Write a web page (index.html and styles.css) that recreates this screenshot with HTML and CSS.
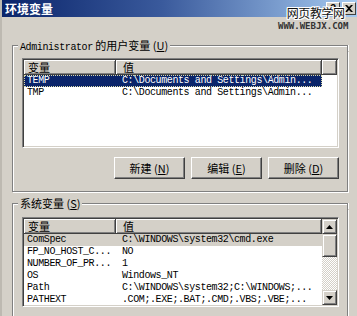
FILE: index.html
```html
<!DOCTYPE html>
<html lang="zh-CN">
<head>
    <meta charset="UTF-8">
    <meta name="viewport" content="width=device-width, initial-scale=1.0">
    <title>环境变量</title>
    <link rel="stylesheet" href="styles.css">
</head>
<body>

<div class="window">
    <div class="titlebar">
        <span class="title">环境变量</span>
        <div class="tb-buttons">
            <span class="tb-btn">?</span>
            <span class="tb-btn">
                <svg width="8" height="7" viewBox="0 0 8 7"><path d="M0 0h2l2 2 2-2h2L5 3.5 8 7H6L4 5 2 7H0l3-3.5z" fill="#000"/></svg>
            </span>
        </div>
    </div>

    <!-- watermark over the corner -->
    <div class="watermark">
        <div class="wm-cn">网页教学网</div>
        <div class="wm-en">WWW.WEBJX.COM</div>
    </div>

    <div class="content">
        <section class="group">
            <div class="group-top"><span class="group-title"><span class="mono">Administrator</span> 的用户变量 (<u>U</u>)</span></div>
            <div class="group-body user-body">
                <div class="list">
                    <div class="list-main">
                        <div class="hd">
                            <div class="h1">变量</div>
                            <div class="h2">值</div>
                            <div class="hfill"></div>
                        </div>
                        <div class="row sel"><div class="c1 mono">TEMP</div><div class="c2 mono">C:\Documents and Settings\Admin...</div></div>
                        <div class="row"><div class="c1 mono">TMP</div><div class="c2 mono">C:\Documents and Settings\Admin...</div></div>
                    </div>
                </div>
                <div class="buttons">
                    <button class="btn">新建 (<u>N</u>)</button>
                    <button class="btn">编辑 (<u>E</u>)</button>
                    <button class="btn">删除 (<u>D</u>)</button>
                </div>
            </div>
        </section>

        <section class="group sys">
            <div class="group-top"><span class="group-title">系统变量 (<u>S</u>)</span></div>
            <div class="group-body sys-body">
                <div class="list">
                    <div class="list-main">
                        <div class="hd">
                            <div class="h1">变量</div>
                            <div class="h2">值</div>
                        </div>
                        <div class="row dim"><div class="c1 mono">ComSpec</div><div class="c2 mono">C:\WINDOWS\system32\cmd.exe</div></div>
                        <div class="row"><div class="c1 mono">FP_NO_HOST_C...</div><div class="c2 mono">NO</div></div>
                        <div class="row"><div class="c1 mono">NUMBER_OF_PR...</div><div class="c2 mono">1</div></div>
                        <div class="row"><div class="c1 mono">OS</div><div class="c2 mono">Windows_NT</div></div>
                        <div class="row"><div class="c1 mono">Path</div><div class="c2 mono">C:\WINDOWS\system32;C:\WINDOWS;...</div></div>
                        <div class="row"><div class="c1 mono">PATHEXT</div><div class="c2 mono">.COM;.EXE;.BAT;.CMD;.VBS;.VBE;...</div></div>
                    </div>
                    <div class="scrollbar">
                        <div class="sb-btn"><svg width="7" height="4" viewBox="0 0 7 4"><path d="M3.5 0L7 4H0z" fill="#000"/></svg></div>
                        <div class="sb-thumb"></div>
                        <div class="sb-track"></div>
                        <div class="sb-btn"><svg width="7" height="4" viewBox="0 0 7 4"><path d="M0 0h7L3.5 4z" fill="#000"/></svg></div>
                    </div>
                </div>
            </div>
        </section>
    </div>
</div>

</body>
</html>
```

FILE: styles.css
```css
body {
    margin: 0;
    background: #d4d0c8;
    font-family: "Noto Sans CJK SC", sans-serif;
    font-size: 11px;
    color: #000;
}
.window {
    position: relative;
    width: 355px;
    height: 316px;
    overflow: hidden;
    background: #d4d0c8;
    border-left: 2px solid #bdb9b1;
}
.titlebar {
    display: flex;
    align-items: center;
    height: 17px;
    padding: 0 1px 0 3px;
    background: linear-gradient(to right, #0a246a, #3a5a9c 45%, #a6caf0);
    color: #fff;
}
.title {
    font-size: 12px;
    font-weight: bold;
    line-height: 17px;
}
.tb-buttons {
    display: flex;
    gap: 2px;
    margin-left: auto;
}
.tb-btn {
    display: flex;
    align-items: center;
    justify-content: center;
    width: 12px;
    height: 11px;
    background: #d4d0c8;
    border: 1px solid;
    border-color: #fff #404040 #404040 #fff;
    color: #000;
    font-family: "Liberation Sans", sans-serif;
    font-weight: bold;
    font-size: 10px;
    line-height: 11px;
}
.watermark {
    position: absolute;
    left: 276px;
    top: 5px;
    text-align: center;
}
.wm-cn {
    font-size: 12px;
    line-height: 15px;
    color: #111;
    padding-left: 5px;
    letter-spacing: -0.4px;
    text-shadow: 1px 0 #fff, -1px 0 #fff, 0 1px #fff, 0 -1px #fff, 1px 1px #fff, -1px -1px #fff, 1px -1px #fff, -1px 1px #fff;
}
.wm-en {
    font-family: "DejaVu Sans Mono", monospace;
    font-weight: bold;
    font-size: 9px;
    line-height: 10px;
    color: #333;
    margin-top: 1px;
}
.content {
    padding: 22px 9px 0 10px;
}
.group-top {
    display: flex;
    height: 12px;
}
.group-top::before {
    content: "";
    width: 5px;
    margin-top: 6px;
    border-top: 1px solid #808080;
    border-left: 1px solid #808080;
    box-shadow: inset 1px 1px 0 #fff;
}
.group-top::after {
    content: "";
    flex: 1;
    margin-top: 6px;
    border-top: 1px solid #808080;
    border-right: 1px solid #808080;
    box-shadow: inset 0 1px 0 #fff, 1px 0 0 #fff;
}
.group-title {
    padding: 0 2px;
    line-height: 12px;
    white-space: nowrap;
}
.group-body {
    border: 1px solid #808080;
    border-top: 0;
    box-shadow: inset 1px 0 0 #fff, 1px 1px 0 #fff;
}
.user-body {
    padding: 7px 8px 12px 9px;
}
.sys {
    margin-top: 5px;
}
.sys-body {
    padding: 8px 8px 12px 9px;
}
.mono {
    font-family: "Liberation Mono", monospace;
    font-size: 10px;
    letter-spacing: -0.4px;
}
.list {
    display: flex;
    height: 90px;
    box-sizing: border-box;
    background: #fff;
    border: 1px solid;
    border-color: #808080 #fff #fff #808080;
    box-shadow: inset 1px 1px 0 #404040, inset -1px -1px 0 #d4d0c8;
    padding: 1px;
}
.list-main {
    flex: 1;
}
.hd {
    display: flex;
    height: 15px;
}
.hd div {
    box-sizing: border-box;
    height: 15px;
    line-height: 14px;
    background: #d4d0c8;
    border-right: 1px solid #404040;
    border-bottom: 1px solid #404040;
    box-shadow: inset 1px 1px 0 #fff, inset -1px -1px 0 #808080;
}
.h1 {
    width: 92px;
    padding-left: 4px;
}
.h2 {
    width: 206px;
    padding-left: 7px;
}
.hfill {
    flex: 1;
}
.row {
    display: flex;
    width: 298px;
    height: 12px;
    line-height: 12px;
    white-space: nowrap;
}
.c1 {
    width: 92px;
    padding-left: 3px;
    box-sizing: border-box;
}
.c2 {
    width: 206px;
    padding-left: 6px;
    box-sizing: border-box;
}
.row.sel {
    background: #0a246a;
    color: #fff;
    outline: 1px dotted #d8d8a8;
    outline-offset: -1px;
}
.row.dim {
    background: #d4d0c8;
}
.buttons {
    display: flex;
    justify-content: flex-end;
    gap: 6px;
    margin-top: 9px;
}
.btn {
    width: 71px;
    height: 22px;
    padding: 0;
    background: #d4d0c8;
    border: 1px solid;
    border-color: #fff #404040 #404040 #fff;
    box-shadow: inset -1px -1px 0 #808080;
    font-family: "Noto Sans CJK SC", sans-serif;
    font-size: 11px;
    color: #000;
}
.scrollbar {
    display: flex;
    flex-direction: column;
    width: 15px;
}
.sb-btn, .sb-thumb {
    box-sizing: border-box;
    height: 15px;
    display: flex;
    align-items: center;
    justify-content: center;
    background: #d4d0c8;
    border: 1px solid;
    border-color: #d4d0c8 #404040 #404040 #d4d0c8;
    box-shadow: inset 1px 1px 0 #fff, inset -1px -1px 0 #808080;
}
.sb-thumb {
    height: 23px;
}
.sb-track {
    flex: 1;
    background: repeating-conic-gradient(#fff 0 25%, #d4d0c8 0 50%) 0 0 / 2px 2px;
}
```
